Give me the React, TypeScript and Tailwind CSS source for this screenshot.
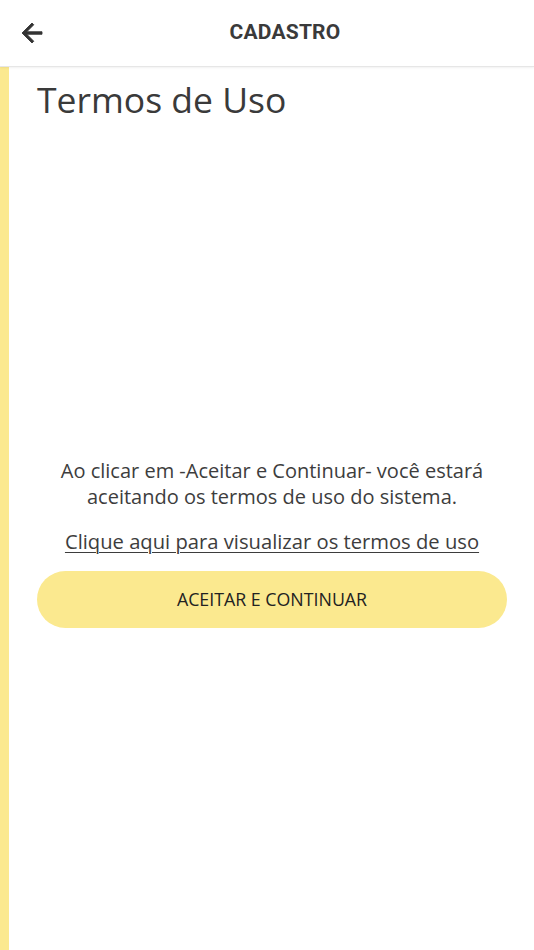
export default function App() {
  return (
    <div className="flex flex-col h-[950px] bg-white" style={{ fontFamily: '"Open Sans", sans-serif' }}>
      <header className="h-[67px] shrink-0 flex items-center relative border-b border-[#e6e6e6] shadow-[0_1px_2px_rgba(0,0,0,0.06)]">
        <button className="absolute left-[13px] top-[14px] p-1">
          <svg width="30" height="30" viewBox="0 0 24 24" fill="#333">
            <path d="M20 11H7.83l5.59-5.59L12 4l-8 8 8 8 1.41-1.41L7.83 13H20v-2z" stroke="#333" strokeWidth="0.7" />
          </svg>
        </button>
        <h1 className="w-full pl-[36px] text-center text-[21px] font-bold text-[#3a3a3a] tracking-[0.2px]" style={{ fontFamily: 'Roboto, sans-serif' }}>
          CADASTRO
        </h1>
      </header>
      <div className="flex flex-1">
        <div className="w-[9px] shrink-0 bg-[#fbe98f]" />
        <main className="flex-1 pl-[28px] pr-[27px]">
          <h2 className="text-[35.5px] text-[#3a3a3a] leading-none mt-[15px]">Termos de Uso</h2>
          <p className="mt-[340px] text-center text-[20px] leading-[26px] text-[#3d3d3d]">
            Ao clicar em -Aceitar e Continuar- você estará<br />aceitando os termos de uso do sistema.
          </p>
          <p className="mt-[18px] text-center text-[20.2px] leading-[26px] text-[#3d3d3d] underline underline-offset-[3px] decoration-1">
            Clique aqui para visualizar os termos de uso
          </p>
          <button className="mt-[17px] w-full h-[57px] rounded-full bg-[#fbe98f] text-[17.8px] text-[#222]">
            ACEITAR E CONTINUAR
          </button>
        </main>
      </div>
    </div>
  );
}
